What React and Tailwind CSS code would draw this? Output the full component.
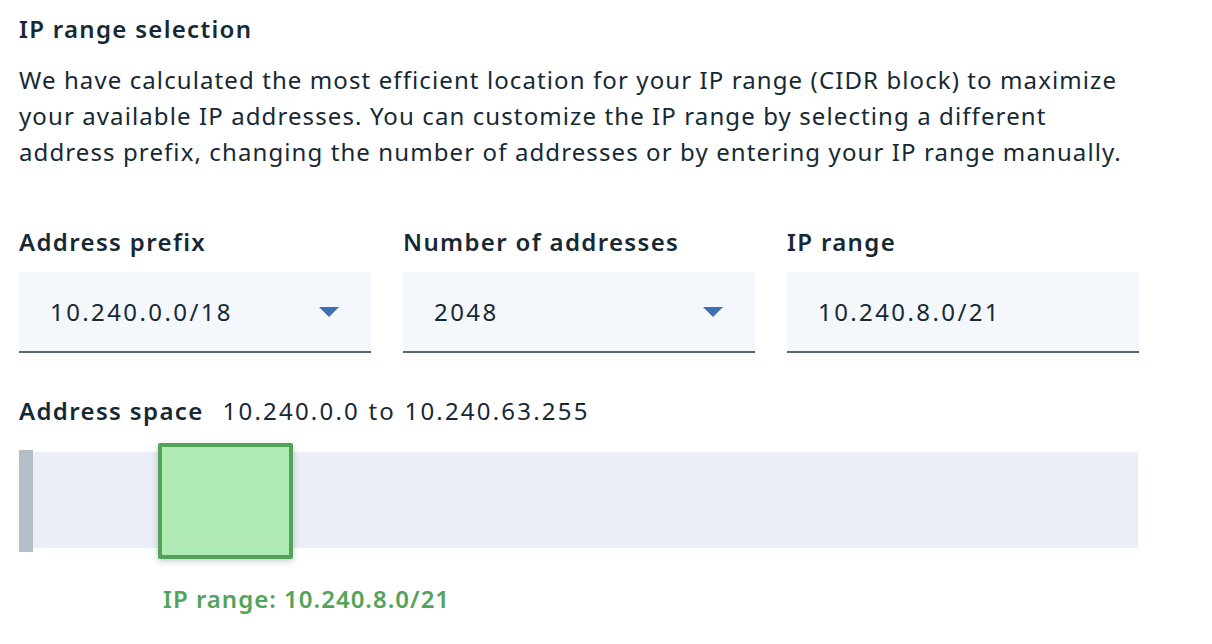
import React from 'react';

const fields = [
  { label: 'Address prefix', value: '10.240.0.0/18', select: true },
  { label: 'Number of addresses', value: '2048', select: true },
  { label: 'IP range', value: '10.240.8.0/21', select: false },
];

function Caret() {
  return (
    <svg width="20" height="10" viewBox="0 0 20 10" className="shrink-0">
      <path d="M0 0 L20 0 L10 10 Z" fill="#3d70b2" />
    </svg>
  );
}

export default function App() {
  return (
    <div
      className="bg-white w-[1212px] h-[644px] pl-[19px] pt-[11px] text-[#152935] text-[24px] leading-[36px]"
      style={{ fontFamily: '"Noto Sans", "Open Sans", sans-serif' }}
    >
      <h1 className="font-semibold tracking-[1.3px]">IP range selection</h1>
      <p className="mt-[15px] w-[1130px] tracking-[1.1px]">
        We have calculated the most efficient location for your IP range (CIDR block) to maximize your
        available IP addresses. You can customize the IP range by selecting a different address prefix,
        changing the number of addresses or by entering your IP range manually.
      </p>

      {/* Prefix / count / range inputs */}
      <div className="mt-[54px] flex gap-8">
        {fields.map((f) => (
          <div key={f.label} className="w-[352px]">
            <div className="font-semibold tracking-[1.35px]">{f.label}</div>
            <div className="mt-3 h-[81px] bg-[#f4f7fb] border-b-2 border-[#5a6872] flex items-center justify-between pl-[31px] pr-8">
              <span className="tracking-[2.4px]">{f.value}</span>
              {f.select && <Caret />}
            </div>
          </div>
        ))}
      </div>

      <div className="mt-[40px] flex items-center">
        <span className="font-semibold tracking-[1.35px]">Address space</span>
        <span className="ml-[19px] tracking-[2.2px]">10.240.0.0 to 10.240.63.255</span>
      </div>

      {/* Address space bar */}
      <div className="relative mt-[14px] pt-[9px] h-[116px] w-[1119px]">
        <div className="h-[96px] bg-[#ebeef6]" />
        <div className="absolute left-0 top-[7px] w-[14px] h-[102px] bg-[#b4bfc7]" />
        <div className="absolute left-[139px] top-0 w-[135px] h-[116px] rounded-[2px] bg-[#b0eab5] border-4 border-[#52a257] shadow-[0_2px_6px_rgba(60,80,110,0.3)]" />
      </div>

      <div className="mt-[22px] ml-[144px] font-semibold tracking-[1px] text-[#53a35a]">IP range: 10.240.8.0/21</div>
    </div>
  );
}
